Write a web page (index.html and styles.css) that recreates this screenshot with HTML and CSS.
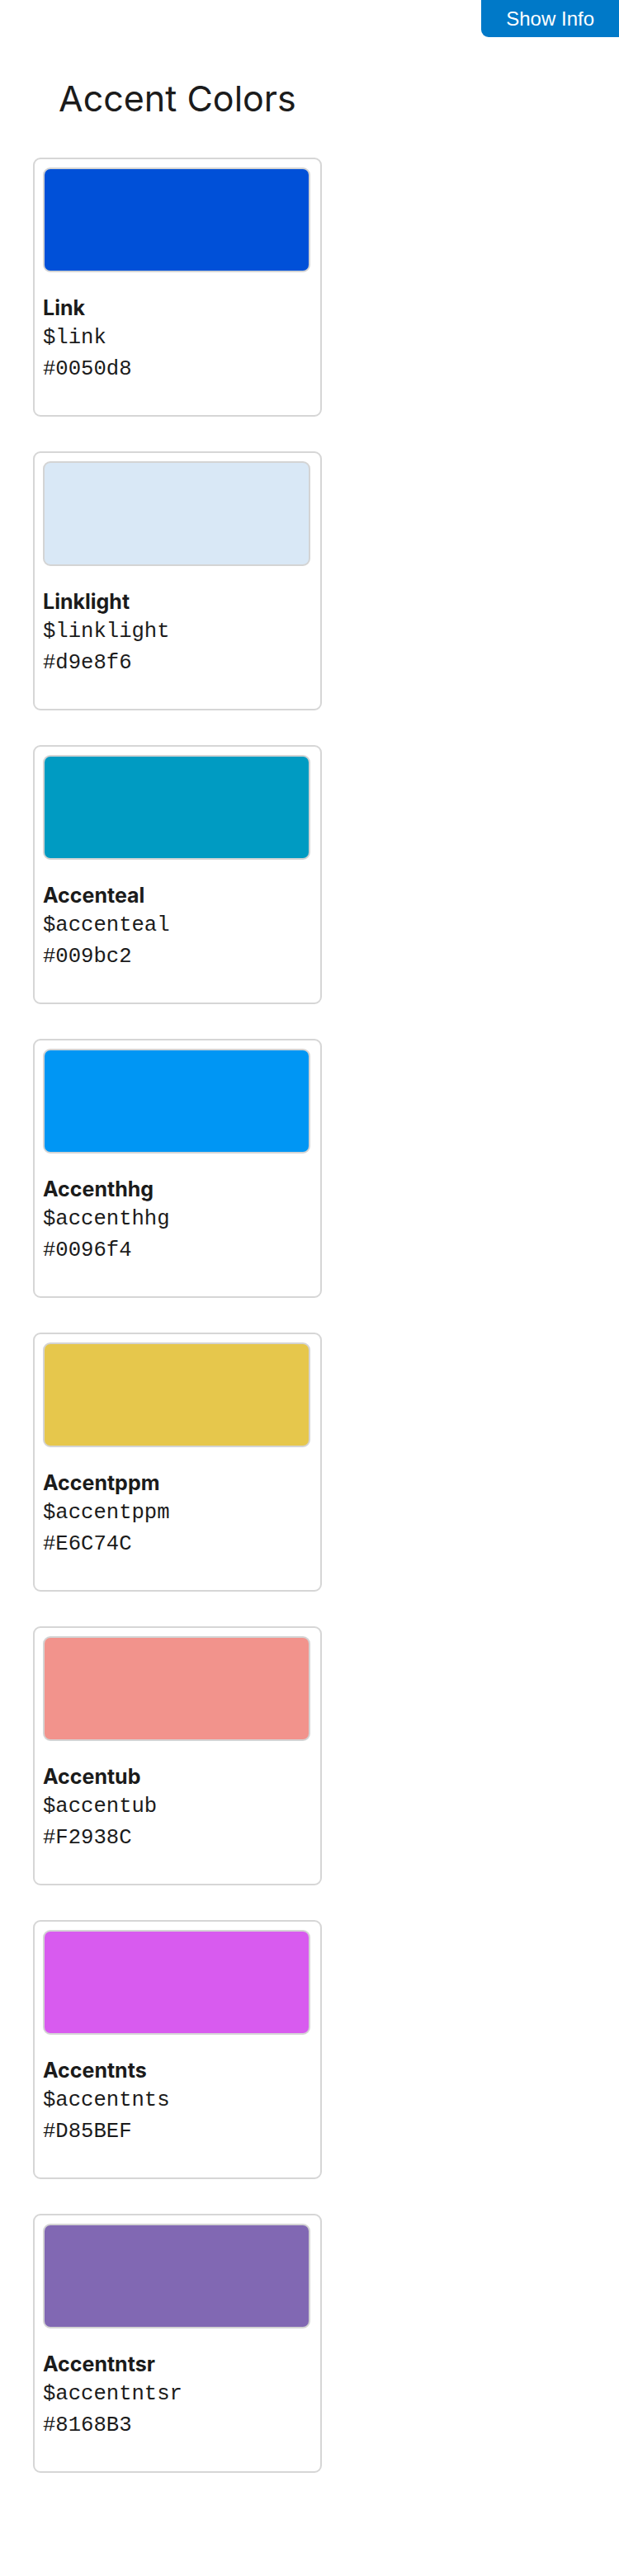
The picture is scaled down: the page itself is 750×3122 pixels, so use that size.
FILE: index.html
```html
<!DOCTYPE html>
<html lang="en">
<head>
<meta charset="utf-8">
<title>Accent Colors</title>
<link rel="stylesheet" href="styles.css">
</head>
<body>
<button class="info-toggle" type="button">Show Info</button>
<main class="page">
  <h1 class="page-title">Accent Colors</h1>
  <div class="card-list">
    <div class="card">
      <div class="swatch" style="background-color:#0050d8"></div>
      <div class="info">
        <div class="name">Link</div>
        <div class="code">$link</div>
        <div class="code">#0050d8</div>
      </div>
    </div>
    <div class="card">
      <div class="swatch" style="background-color:#d9e8f6"></div>
      <div class="info">
        <div class="name">Linklight</div>
        <div class="code">$linklight</div>
        <div class="code">#d9e8f6</div>
      </div>
    </div>
    <div class="card">
      <div class="swatch" style="background-color:#009bc2"></div>
      <div class="info">
        <div class="name">Accenteal</div>
        <div class="code">$accenteal</div>
        <div class="code">#009bc2</div>
      </div>
    </div>
    <div class="card">
      <div class="swatch" style="background-color:#0096f4"></div>
      <div class="info">
        <div class="name">Accenthhg</div>
        <div class="code">$accenthhg</div>
        <div class="code">#0096f4</div>
      </div>
    </div>
    <div class="card">
      <div class="swatch" style="background-color:#E6C74C"></div>
      <div class="info">
        <div class="name">Accentppm</div>
        <div class="code">$accentppm</div>
        <div class="code">#E6C74C</div>
      </div>
    </div>
    <div class="card">
      <div class="swatch" style="background-color:#F2938C"></div>
      <div class="info">
        <div class="name">Accentub</div>
        <div class="code">$accentub</div>
        <div class="code">#F2938C</div>
      </div>
    </div>
    <div class="card">
      <div class="swatch" style="background-color:#D85BEF"></div>
      <div class="info">
        <div class="name">Accentnts</div>
        <div class="code">$accentnts</div>
        <div class="code">#D85BEF</div>
      </div>
    </div>
    <div class="card">
      <div class="swatch" style="background-color:#8168B3"></div>
      <div class="info">
        <div class="name">Accentntsr</div>
        <div class="code">$accentntsr</div>
        <div class="code">#8168B3</div>
      </div>
    </div>
  </div>
</main>
</body>
</html>
```
FILE: styles.css
```css
html, body {
  margin: 0;
  padding: 0;
  background: #ffffff;
}

body {
  font-family: Inter, "Noto Sans", sans-serif;
  color: #1b1b1b;
  position: relative;
  min-height: 3122px;
}

.info-toggle {
  position: absolute;
  top: 0;
  right: 0;
  box-sizing: border-box;
  height: 45px;
  margin: 0;
  padding: 0 30px;
  border: none;
  border-radius: 0 0 0 9px;
  background: #0079c8;
  color: #ffffff;
  font-family: "Liberation Sans", Arial, sans-serif;
  font-size: 24px;
  line-height: 45px;
  white-space: nowrap;
  cursor: pointer;
}

.page {
  padding-top: 93px;
}

.page-title {
  margin: 0 0 46px 71px;
  font-size: 43px;
  font-weight: 400;
  line-height: 52px;
  color: #1b1b1b;
}

.card-list {
  display: flex;
  flex-direction: column;
  gap: 42px;
  padding-left: 40px;
}

.card {
  box-sizing: border-box;
  width: 350px;
  height: 314px;
  border: 2px solid #d6d6d6;
  border-radius: 9px;
  padding: 10px 12px 0 10px;
}

.swatch {
  box-sizing: border-box;
  height: 127px;
  border: 2px solid #d4d4d4;
  border-radius: 9px;
}

.info {
  margin-top: 25px;
}

.name {
  font-weight: 700;
  font-size: 25px;
  line-height: 36px;
}

.code {
  font-family: "Liberation Mono", "Courier New", monospace;
  font-size: 25.6px;
  line-height: 38.4px;
}
```
